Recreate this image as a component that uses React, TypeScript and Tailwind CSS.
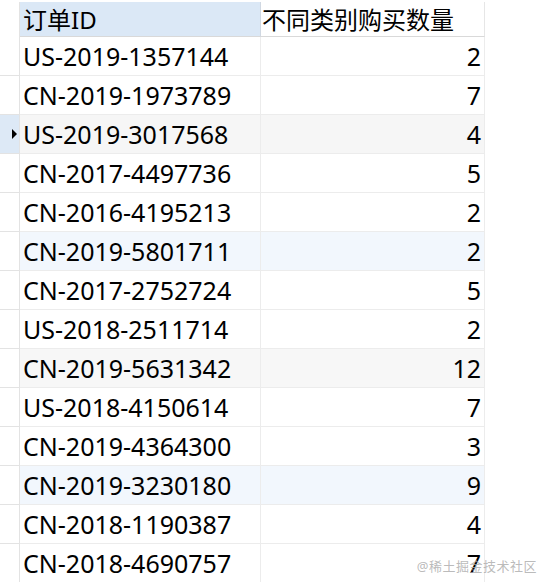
import React from "react";

const rows: { id: string; n: number; tone?: "sel" | "blue" | "gray" }[] = [
  { id: "US-2019-1357144", n: 2 },
  { id: "CN-2019-1973789", n: 7 },
  { id: "US-2019-3017568", n: 4, tone: "sel" },
  { id: "CN-2017-4497736", n: 5 },
  { id: "CN-2016-4195213", n: 2 },
  { id: "CN-2019-5801711", n: 2, tone: "blue" },
  { id: "CN-2017-2752724", n: 5 },
  { id: "US-2018-2511714", n: 2 },
  { id: "CN-2019-5631342", n: 12, tone: "gray" },
  { id: "US-2018-4150614", n: 7 },
  { id: "CN-2019-4364300", n: 3 },
  { id: "CN-2019-3230180", n: 9, tone: "blue" },
  { id: "CN-2018-1190387", n: 4 },
  { id: "CN-2018-4690757", n: 7 },
];

export default function App() {
  return (
    <div
      className="relative w-[540px] h-[582px] overflow-hidden bg-white pt-[2px] text-[25px] text-black"
      style={{ fontFamily: '"Noto Sans", "Noto Sans CJK SC", sans-serif' }}
    >
      <div className="grid grid-cols-[20px_241px_224px] w-[485px]">
        {/* header */}
        <div className="h-[35px] border-r border-[#e3e3e3]" />
        <div className="h-[35px] bg-[#dbe8f6] border-r border-[#d0d8e2] border-b border-b-[#d9d9d9] pl-[3px] leading-[35px] text-[24px] whitespace-nowrap">
          订单ID
        </div>
        <div className="h-[35px] bg-white border-r border-[#e6e6e6] border-b border-b-[#d9d9d9] pl-[1px] leading-[35px] text-[24px] whitespace-nowrap">
          不同类别购买数量
        </div>

        {rows.map((r) => {
          const bg =
            r.tone === "sel"
              ? "bg-[#f6f6f6]"
              : r.tone === "gray"
              ? "bg-[#f7f7f7]"
              : r.tone === "blue"
              ? "bg-[#f2f7fd]"
              : "bg-white";
          return (
            <React.Fragment key={r.id}>
              <div
                className={`h-[39px] border-r border-b border-[#e3e3e3] flex items-center ${
                  r.tone === "sel" ? "bg-[#dde9f6]" : "bg-white"
                }`}
              >
                {r.tone === "sel" && (
                  <span className="ml-[12px] w-0 h-0 border-y-[5px] border-y-transparent border-l-[5px] border-l-black" />
                )}
              </div>
              <div
                className={`h-[39px] ${bg} border-r border-b border-[#ececec] pl-[3px] leading-[38px] whitespace-nowrap`}
              >
                {r.id}
              </div>
              <div
                className={`h-[39px] ${bg} border-r border-b border-[#ececec] pr-[3px] leading-[38px] text-right`}
              >
                {r.n}
              </div>
            </React.Fragment>
          );
        })}
      </div>

      <div className="pointer-events-none absolute right-[3px] bottom-[6px] text-[13px] text-[#a9a9a9]/80 tracking-[0.5px]">
        @稀土掘金技术社区
      </div>
    </div>
  );
}
